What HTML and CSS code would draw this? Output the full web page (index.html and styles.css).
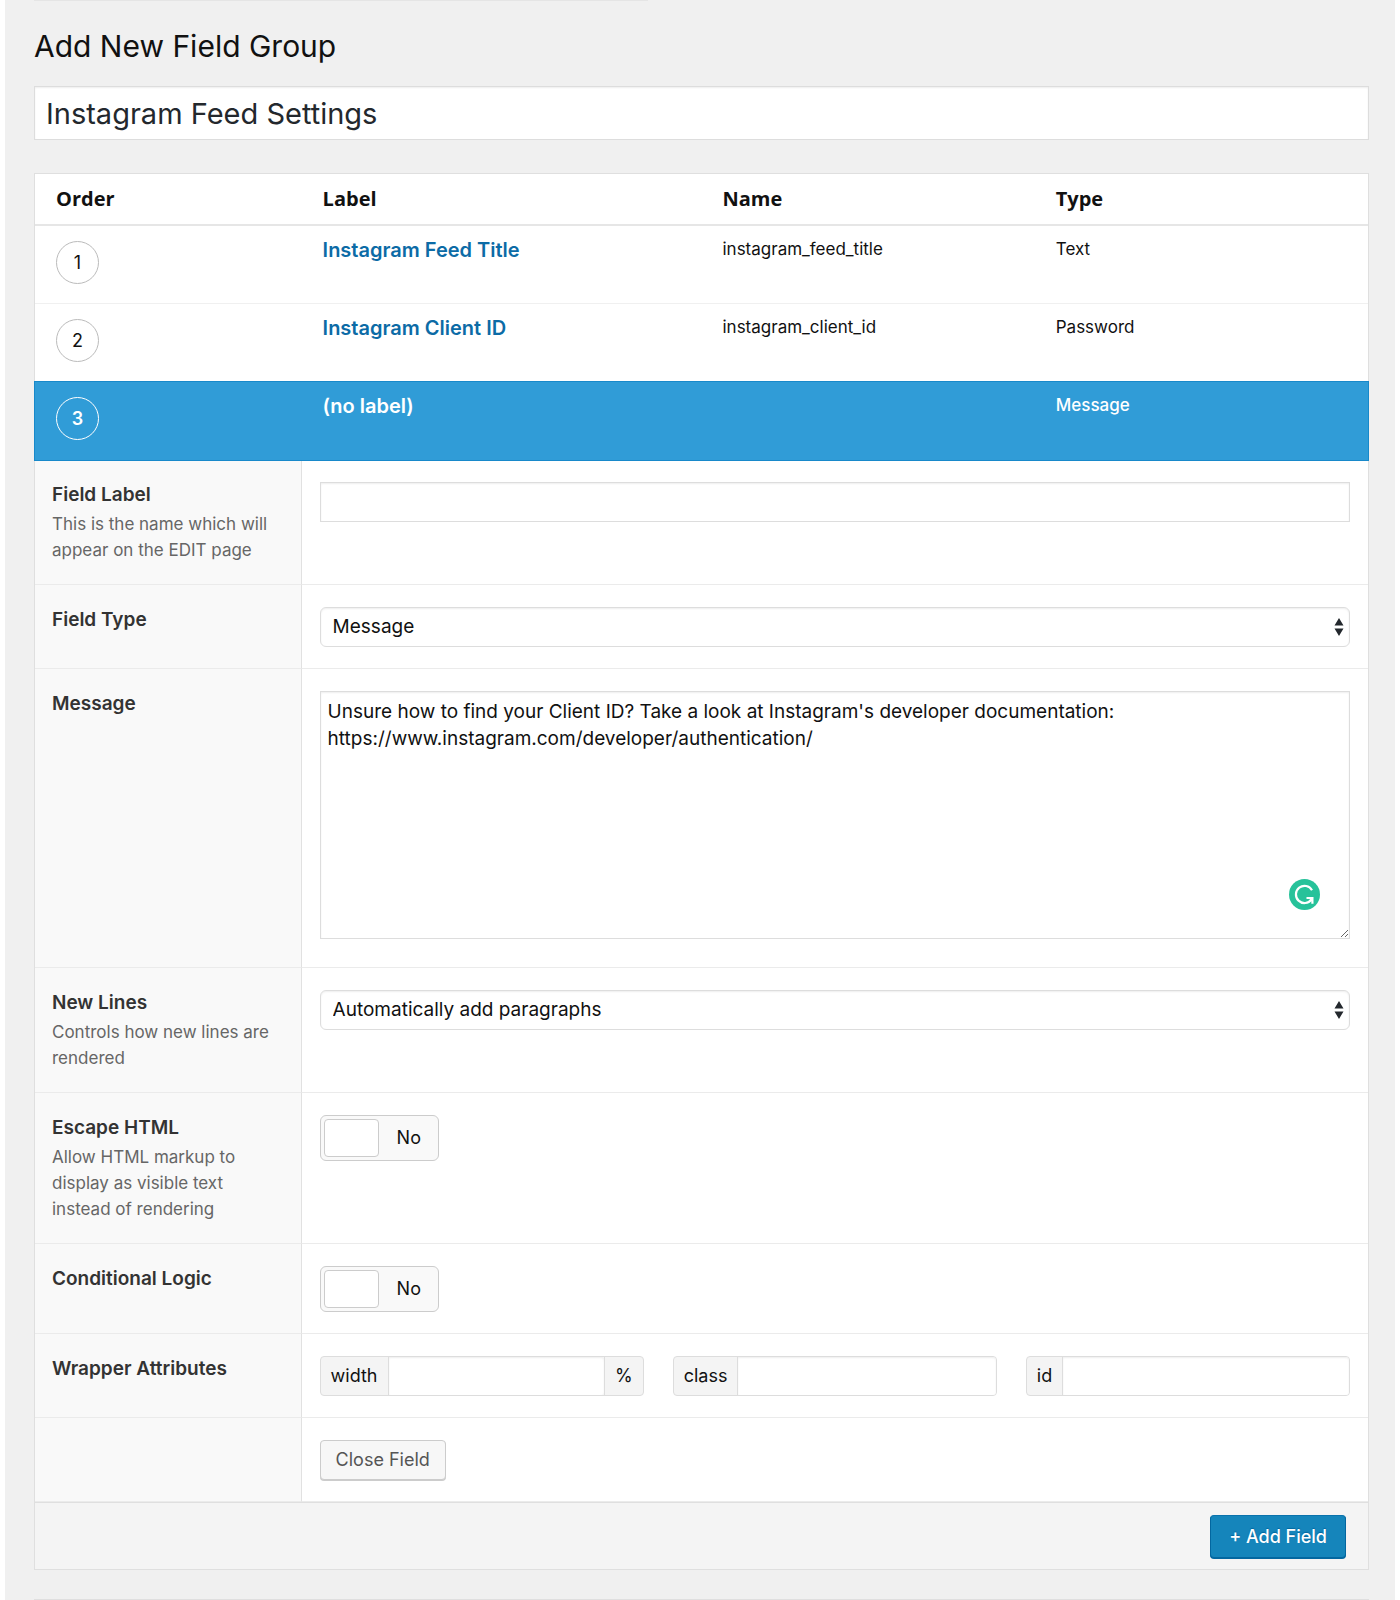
FILE: index.html
```html
<!DOCTYPE html>
<html lang="en">

<head>
    <meta charset="UTF-8">
    <meta name="viewport" content="width=device-width, initial-scale=1.0">
    <title>Add New Field Group</title>
    <link rel="stylesheet" href="styles.css">
</head>

<body>
    <main class="wrap">
        <div class="notice-edge"></div>
        <h1>Add New Field Group</h1>
        <input class="title" type="text" aria-label="Field group title" value="Instagram Feed Settings">

        <form class="box" action="" method="post">
            <table class="fields">
                <thead>
                    <tr>
                        <th class="col-order">Order</th>
                        <th class="col-label">Label</th>
                        <th class="col-name">Name</th>
                        <th>Type</th>
                    </tr>
                </thead>
                <tbody>
                    <tr>
                        <td><span class="order">1</span></td>
                        <td><a href="#">Instagram Feed Title</a></td>
                        <td>instagram_feed_title</td>
                        <td>Text</td>
                    </tr>
                    <tr>
                        <td><span class="order">2</span></td>
                        <td><a href="#">Instagram Client ID</a></td>
                        <td>instagram_client_id</td>
                        <td>Password</td>
                    </tr>
                    <tr class="open">
                        <td><span class="order">3</span></td>
                        <td><a href="#">(no label)</a></td>
                        <td></td>
                        <td>Message</td>
                    </tr>
                </tbody>
            </table>

            <!-- SETTINGS OF THE OPEN FIELD -->
            <div class="setting">
                <div class="setting-label">
                    <label for="field-label">Field Label</label>
                    <p>This is the name which will appear on the EDIT page</p>
                </div>
                <div class="setting-input">
                    <input class="text" id="field-label" type="text">
                </div>
            </div>

            <div class="setting">
                <div class="setting-label">
                    <label for="field-type">Field Type</label>
                </div>
                <div class="setting-input">
                    <div class="select">
                        <select id="field-type">
                            <option>Message</option>
                            <option>Text</option>
                            <option>Password</option>
                        </select>
                        <svg width="10" height="18" viewBox="0 0 10 18"><path d="M5 0l4.500 7.500h-9zM5 18l4.500-7.500h-9z" fill="#23282d"/></svg>
                    </div>
                </div>
            </div>

            <div class="setting">
                <div class="setting-label">
                    <label for="message">Message</label>
                </div>
                <div class="setting-input">
                    <div class="message">
                        <textarea id="message" spellcheck="false">Unsure how to find your Client ID? Take a look at Instagram's developer documentation:
https://www.instagram.com/developer/authentication/</textarea>
                        <svg class="grammar" width="31" height="31" viewBox="0 0 31 31">
                            <circle cx="15.500" cy="15.500" r="15.500" fill="#27c29a"/>
                            <path d="M23 11.200A8.600 8.600 0 1 0 22.500 20.500" fill="none" stroke="#fff" stroke-width="2.200"/>
                            <path d="M17.500 19H23.400V24.800" fill="none" stroke="#fff" stroke-width="2.200"/>
                            <path d="M19 18.500h5v5z" fill="#fff"/>
                        </svg>
                    </div>
                </div>
            </div>

            <div class="setting">
                <div class="setting-label">
                    <label for="new-lines">New Lines</label>
                    <p>Controls how new lines are rendered</p>
                </div>
                <div class="setting-input">
                    <div class="select">
                        <select id="new-lines">
                            <option>Automatically add paragraphs</option>
                            <option>Automatically add &lt;br&gt;</option>
                            <option>No Formatting</option>
                        </select>
                        <svg width="10" height="18" viewBox="0 0 10 18"><path d="M5 0l4.500 7.500h-9zM5 18l4.500-7.500h-9z" fill="#23282d"/></svg>
                    </div>
                </div>
            </div>

            <div class="setting">
                <div class="setting-label">
                    <label for="escape-html">Escape HTML</label>
                    <p>Allow HTML markup to display as visible text instead of rendering</p>
                </div>
                <div class="setting-input">
                    <label class="switch"><input id="escape-html" type="checkbox"><span>No</span></label>
                </div>
            </div>

            <div class="setting">
                <div class="setting-label">
                    <label for="conditional">Conditional Logic</label>
                </div>
                <div class="setting-input">
                    <label class="switch"><input id="conditional" type="checkbox"><span>No</span></label>
                </div>
            </div>

            <div class="setting">
                <div class="setting-label">
                    <label for="attr-width">Wrapper Attributes</label>
                </div>
                <div class="setting-input attributes">
                    <div class="group">
                        <label for="attr-width">width</label>
                        <input id="attr-width" type="text">
                        <span>%</span>
                    </div>
                    <div class="group">
                        <label for="attr-class">class</label>
                        <input id="attr-class" type="text">
                    </div>
                    <div class="group">
                        <label for="attr-id">id</label>
                        <input id="attr-id" type="text">
                    </div>
                </div>
            </div>

            <div class="setting">
                <div class="setting-label"></div>
                <div class="setting-input">
                    <button class="btn" type="button">Close Field</button>
                </div>
            </div>

            <div class="box-footer">
                <button class="btn btn-primary" type="button">+ Add Field</button>
            </div>
        </form>

        <div class="box next"></div>
    </main>
</body>

</html>
```

FILE: styles.css
```css
* {
    box-sizing: border-box;
}

body {
    margin: 0 5px;
    background-color: #fff;
    color: #111;
    font-family: Inter, Roboto, "Liberation Sans", sans-serif;
    font-size: 18px;
    line-height: 26px;
}

input,
select,
textarea,
button {
    font: inherit;
    color: inherit;
}

.wrap {
    display: flow-root;
    padding: 0 26px 0 29px;
    background-color: #f0f0f0;
}

/* bottom edge of the notice above the heading */
.notice-edge {
    width: 46%;
    height: 1px;
    background-color: #e5e5e5;
}

h1 {
    margin: 25px 0 20px;
    font-size: 30px;
    font-weight: 400;
    line-height: 40px;
}

.title {
    display: block;
    width: 100%;
    height: 54px;
    padding: 0 11px;
    border: 1px solid #ddd;
    background-color: #fff;
    box-shadow: inset 0 1px 2px rgba(0, 0, 0, 0.07);
    color: #23282d;
    font-size: 29px;
}

.box {
    margin-top: 33px;
    border: 1px solid #dfdfdf;
    background-color: #fff;
}

.next {
    height: 2px;
    margin-top: 29px;
    border-bottom: 0;
}

/* field list */
.fields {
    width: 100%;
    table-layout: fixed;
    border-spacing: 0;
}

.fields th {
    height: 52px;
    padding: 0 0 0 21px;
    border-bottom: 2px solid #e6e6e6;
    font-family: "Open Sans", "Noto Sans", sans-serif;
    font-size: 20px;
    font-weight: 700;
    text-align: left;
}

.col-order {
    width: 20%;
}

.col-label {
    width: 30%;
}

.col-name {
    width: 25%;
}

.fields td {
    height: 78px;
    padding: 10px 0 0 21px;
    border-bottom: 1px solid #f0f0f0;
    font-size: 17px;
    vertical-align: top;
}

.fields a {
    display: block;
    color: #0c6ba6;
    font-size: 20px;
    font-weight: 600;
    line-height: 28px;
    text-decoration: none;
}

.order {
    display: block;
    width: 43px;
    height: 43px;
    margin-top: 5px;
    border: 1px solid #bbb;
    border-radius: 50%;
    font-size: 18px;
    line-height: 42px;
    text-align: center;
}

.fields .open {
    outline: 1px solid #1889ca;
    background-color: #309cd7;
}

.fields .open td {
    border-bottom-color: #309cd7;
    color: #fff;
    font-weight: 500;
}

.fields .open a {
    color: #fff;
}

.open .order {
    border-color: #fff;
    font-weight: 600;
}

/* settings */
.setting {
    display: grid;
    grid-template-columns: 20% 1fr;
}

.setting-label {
    padding: 22px 18px 21px 17px;
    border-right: 1px solid #e1e1e1;
    border-bottom: 1px solid #ebebeb;
    background-color: #f9f9f9;
}

.setting-label label {
    display: block;
    color: #333;
    font-size: 19px;
    font-weight: 600;
}

.setting-label p {
    margin: 3px 0 0;
    color: #666;
    font-size: 17px;
}

.setting-input {
    padding: 22px 18px 21px;
    border-bottom: 1px solid #ebebeb;
}

.text,
select,
textarea {
    display: block;
    width: 100%;
    height: 40px;
    border: 1px solid #ddd;
    background-color: #fff;
    box-shadow: inset 0 1px 2px rgba(0, 0, 0, 0.07);
    font-size: 19px;
}

.select,
.message {
    position: relative;
}

select {
    padding: 0 12px;
    border-radius: 6px;
    appearance: none;
}

.select svg {
    position: absolute;
    top: 11px;
    right: 6px;
    pointer-events: none;
}

textarea {
    height: 248px;
    margin-bottom: 7px;
    padding: 6px 7px;
    line-height: 27px;
    resize: vertical;
}

.grammar {
    position: absolute;
    right: 30px;
    bottom: 29px;
}

.switch {
    display: inline-flex;
    align-items: center;
    height: 46px;
    padding: 0 17px 0 3px;
    gap: 18px;
    border: 1px solid #ccc;
    border-radius: 6px;
    background-color: #f9f9f9;
    vertical-align: top;
}

.switch input {
    width: 55px;
    height: 38px;
    margin: 0;
    border: 1px solid #ccc;
    border-radius: 4px;
    background-color: #fff;
    appearance: none;
}

.attributes {
    display: grid;
    grid-template-columns: repeat(3, minmax(0, 1fr));
    gap: 29px;
}

.group {
    display: flex;
    height: 40px;
    border: 1px solid #ddd;
    border-radius: 4px;
    background-color: #f4f4f4;
    line-height: 38px;
}

.group label,
.group span {
    padding: 0 10px;
}

.group input {
    flex: 1;
    min-width: 0;
    padding: 0 8px;
    border: 0;
    border-left: 1px solid #ddd;
    border-radius: 0 3px 3px 0;
    background-color: #fff;
    box-shadow: inset 0 1px 2px rgba(0, 0, 0, 0.07);
}

.group span {
    border-left: 1px solid #ddd;
}

.btn {
    display: block;
    height: 40px;
    padding: 0 15px;
    border: 1px solid #ccc;
    border-radius: 4px;
    background-color: #f7f7f7;
    box-shadow: 0 1px 0 #ccc;
    color: #555;
    cursor: pointer;
}

.btn-primary {
    height: 43px;
    padding: 0 18px;
    border-color: #0a72ac #0367a0 #0367a0;
    background-color: #1585bb;
    box-shadow: 0 1px 0 #0367a0;
    color: #fff;
    font-weight: 500;
    text-shadow: 0 -1px 1px #0367a0;
}

.box-footer {
    display: flex;
    justify-content: flex-end;
    padding: 12px 22px 11px;
    border-top: 1px solid #dfdfdf;
    background-color: #f4f4f4;
}
```
